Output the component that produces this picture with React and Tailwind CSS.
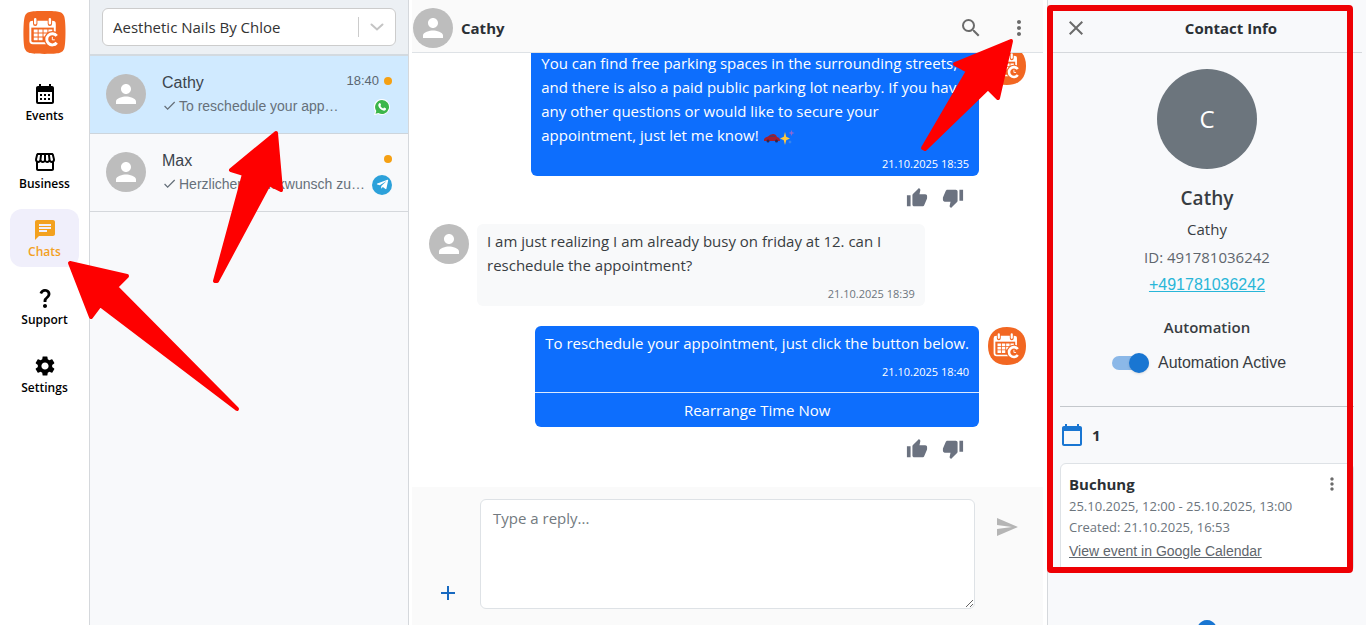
import { useState } from "react";
import { FaTelegramPlane, FaWhatsapp } from "react-icons/fa";
import {
  MdAdd,
  MdAddCircle,
  MdCalendarMonth,
  MdCalendarToday,
  MdChat,
  MdClose,
  MdDone,
  MdMoreVert,
  MdOutlineStorefront,
  MdPerson,
  MdQuestionMark,
  MdSearch,
  MdSend,
  MdSettings,
  MdThumbDown,
  MdThumbUp,
} from "react-icons/md";

const navItems = [
  { label: "Events", icon: MdCalendarMonth },
  { label: "Business", icon: MdOutlineStorefront },
  { label: "Chats", icon: MdChat, active: true },
  { label: "Support", icon: MdQuestionMark },
  { label: "Settings", icon: MdSettings },
];

const chats = [
  {
    name: "Cathy",
    preview: "To reschedule your app…",
    time: "18:40",
    channel: "whatsapp",
    selected: true,
  },
  {
    name: "Max",
    preview: "Herzlichen Glückwunsch zu…",
    time: "",
    channel: "telegram",
  },
];

function Logo({ className, round }) {
  return (
    <svg viewBox="0 0 44 44" className={className} aria-hidden="true">
      <path
        d={
          round
            ? "M22 0C36 0 44 8 44 22S36 44 22 44 0 36 0 22 8 0 22 0Z"
            : "M22 0C38 0 40 1 42 5C44 9 44 35 42 39C40 43 38 44 22 44S4 43 2 39C0 35 0 9 2 5C4 1 6 0 22 0Z"
        }
        fill="#f26722"
      />
      <rect x="7.5" y="11" width="25" height="22" rx="2.5" fill="none" stroke="#fff" strokeWidth="2" />
      <path d="M7 11h26v6H7z" fill="#fff" />
      <path d="M12.5 8v5M27.500 8v5" stroke="#f26722" strokeWidth="4.500" strokeLinecap="round" />
      <path d="M12.500 8.500v4M27.500 8.500v4" stroke="#fff" strokeWidth="2.500" strokeLinecap="round" />
      <path
        d="M11 19h4v3h-4zM16 19h4v3h-4zM21 19h4v3h-4zM26 19h4v3h-4zM11 23h4v3h-4zM16 23h4v3h-4zM21 23h4v3h-4zM11 27h4v3h-4zM16 27h4v3h-4z"
        fill="#fff"
      />
      <circle cx="30" cy="29" r="8.500" fill="#f26722" />
      <path d="M34.500 25.500a5.700 5.700 0 1 0 0 7" fill="none" stroke="#fff" strokeWidth="3" />
      <path d="M30 26.500v3h2.500" fill="none" stroke="#fff" strokeWidth="1" />
    </svg>
  );
}

function Avatar() {
  return (
    <span className="flex size-10 shrink-0 items-center justify-center rounded-full bg-[#bdbdbd] text-white">
      <MdPerson size={30} />
    </span>
  );
}

function ChannelIcon({ channel }) {
  if (channel === "whatsapp") {
    return (
      <svg viewBox="0 0 20 20" className="size-5" aria-hidden="true">
        <path d="M10 2a8 8 0 1 1-3.800 15.100L2 18.200l1.100-4A8 8 0 0 1 10 2z" fill="#fff" />
        <path d="M10 3a7 7 0 1 1-3.600 13L3.500 16.700l.8-2.800A7 7 0 0 1 10 3z" fill="#3cb64a" />
        <path
          d="M7.300 6.300c.5-.4 1-.2 1.200.3l.5 1.200c.1.400-.5.900-.6 1.200.6 1.200 1.500 2 2.700 2.500.4-.2.8-1 1.200-.9l1.400.7c.5.300.4.900.1 1.400-.6.900-1.700 1.100-2.700.8-2.300-.7-4-2.300-4.700-4.500-.3-1 .1-2.100.9-2.700z"
          fill="#fff"
        />
      </svg>
    );
  }
  return (
    <span className="flex size-5 items-center justify-center rounded-full bg-[#2ca1da] text-white">
      <FaTelegramPlane size={13} />
    </span>
  );
}

function Sidebar() {
  return (
    <nav className="flex w-[90px] shrink-0 flex-col items-center border-r border-[#d5d8dc] bg-white pt-[11px]">
      <Logo className="mb-[19px] size-[43px]" />
      <div className="flex flex-col gap-[10px]">
        {navItems.map(({ label, icon: Icon, active }) => (
          <a
            key={label}
            href="#"
            className={`flex h-[58px] w-[69px] flex-col items-center rounded-xl pt-[9px] text-xs font-semibold ${
              active ? "bg-[#f0effb] text-[#f3a11f]" : "text-black"
            }`}
          >
            <Icon size={24} />
            <span className="leading-5">{label}</span>
          </a>
        ))}
      </div>
    </nav>
  );
}

function ChatList() {
  return (
    <aside className="flex w-[319px] shrink-0 flex-col border-r border-[#d5d8dc] bg-[#f8f9fb]">
      <div className="border-b-2 border-[#d3dae0] bg-[#ecf0f4] px-3 pt-2 pb-2">
        <label className="relative flex h-[38px] items-center rounded-md border border-[#ccc] bg-white">
          <select
            aria-label="Business"
            className="h-full w-full appearance-none bg-transparent pl-[10px] text-[15px] text-[#333]"
          >
            <option>Aesthetic Nails By Chloe</option>
          </select>
          <span className="pointer-events-none absolute inset-y-2 right-0 flex w-[37px] items-center justify-center border-l border-[#ccc]">
            <svg viewBox="0 0 14 8" className="h-2 w-3.5" fill="none" stroke="#c4c4c4" strokeWidth="2">
              <path d="M1.500 1.500 7 6.500l5.500-5" strokeLinecap="round" />
            </svg>
          </span>
        </label>
      </div>
      {chats.map((chat) => (
        <button
          key={chat.name}
          type="button"
          className={`flex h-[78px] items-center border-b px-4 pb-[2px] text-left font-['Liberation_Sans',sans-serif] ${
            chat.selected ? "border-[#cdd5dc] bg-[#d0eaff]" : "border-[#d5d8dc]"
          }`}
        >
          <Avatar />
          <span className="ml-4 min-w-0 flex-1">
            <span className="block leading-6 text-[#3b444d]">{chat.name}</span>
            <span className="flex items-center gap-[2px] text-sm leading-[22px] whitespace-nowrap text-[#66707a]">
              <MdDone size={15} className="shrink-0" />
              {chat.preview}
            </span>
          </span>
          <span className="flex flex-col items-end gap-[6px]">
            <span className="flex h-5 items-center gap-[5px] text-[13px] text-[#5b6670]">
              {chat.time}
              <span className="size-2 rounded-full bg-[#f5a013]" />
            </span>
            <ChannelIcon channel={chat.channel} />
          </span>
        </button>
      ))}
    </aside>
  );
}

function Feedback() {
  return (
    <div className="mt-[11px] mr-[62px] flex justify-end gap-[14px] text-[#6b7280]">
      <button type="button" aria-label="Good reply">
        <MdThumbUp size={22} />
      </button>
      <button type="button" aria-label="Bad reply">
        <MdThumbDown size={22} />
      </button>
    </div>
  );
}

function CarSparkles() {
  return (
    <svg viewBox="0 0 32 16" className="inline-block h-4 w-8" role="img" aria-label="Car and sparkles">
      <path d="M1 10q1-2 4-2.500Q7 5 10 5t4 3q3 .5 3 4H1z" fill="#a51d2d" />
      <path d="M6 8q1-1.700 3.500-1.700T12.500 8z" fill="#4a3a68" />
      <circle cx="5" cy="12" r="1.500" fill="#33264a" />
      <circle cx="13.500" cy="12" r="1.500" fill="#33264a" />
      <path d="m22 3 1.200 4.800L27 9.500l-3.800 1.700L22 16l-1.200-4.800L17 9.500l3.800-1.700z" fill="#ffc83d" />
      <path d="m28.500 1 .8 2.200 2.200.8-2.200.8-.8 2.200-.8-2.200L25.500 4l2.200-.8z" fill="#9068d0" />
      <path d="m27 11 .5 1.500 1.500.5-1.500.5L27 15l-.5-1.500L25 13l1.500-.5z" fill="#4a90e8" />
    </svg>
  );
}

function Conversation() {
  return (
    <main className="flex min-w-0 flex-1 flex-col bg-white pr-1 pl-[3px]">
      <header className="flex h-[53px] shrink-0 items-center border-b border-[#dee2e6] bg-[#fafafa] pt-1 pr-3 pl-px">
        <Avatar />
        <h1 className="ml-2 flex-1 text-[15px] font-bold text-[#2b3035]">Cathy</h1>
        <button type="button" aria-label="Search" className="px-3 text-[#6b6b6b]">
          <MdSearch size={24} />
        </button>
        <button type="button" aria-label="More" className="pl-3 text-[#6b6b6b]">
          <MdMoreVert size={24} />
        </button>
      </header>

      <section className="flex min-h-0 flex-1 flex-col justify-end overflow-hidden pr-[17px] pb-[27px] pl-[17px] text-[15px] leading-6">
        <div className="flex items-start justify-end gap-[9px]">
          <div className="w-3/4 rounded-md bg-[#0d6efd] px-[10px] pt-[5px] pb-[3px] text-white">
            <p>
              You can find free parking spaces in the surrounding streets,
              <br />
              and there is also a paid public parking lot nearby. If you have
              <br />
              any other questions or would like to secure your
              <br />
              appointment, just let me know! <CarSparkles />
            </p>
            <p className="mt-2 text-right text-[11px] leading-[18px]">21.10.2025 18:35</p>
          </div>
          <Logo round className="mt-px size-[38px] shrink-0" />
        </div>
        <Feedback />

        <div className="mt-[15px] flex items-start gap-2">
          <Avatar />
          <div className="w-3/4 rounded-md bg-[#f8f9fa] px-[10px] pt-[5px] pb-[3px] text-[#383d42]">
            <p>
              I am just realizing I am already busy on friday at 12. can I
              <br />
              reschedule the appointment?
            </p>
            <p className="mt-2 text-right text-[11px] leading-[18px] text-[#6c757d]">21.10.2025 18:39</p>
          </div>
        </div>

        <div className="mt-5 flex items-start justify-end gap-[9px]">
          <div className="overflow-hidden rounded-md bg-[#0d6efd] text-white">
            <div className="px-[10px] pt-[5px] pb-[11px]">
              <p>To reschedule your appointment, just click the button below.</p>
              <p className="mt-2 text-right text-[11px] leading-[18px]">21.10.2025 18:40</p>
            </div>
            <button type="button" className="h-[35px] w-full border-t border-[#dbe9ff]">
              Rearrange Time Now
            </button>
          </div>
          <Logo round className="mt-px size-[38px] shrink-0" />
        </div>
        <Feedback />
      </section>

      <footer className="flex shrink-0 gap-2 bg-[#fafafa] px-3 pt-3 pb-4">
        <button
          type="button"
          aria-label="Add attachment"
          className="flex h-8 w-12 items-center justify-center self-end text-[#1769c0]"
        >
          <MdAdd size={24} />
        </button>
        <textarea
          aria-label="Reply"
          placeholder="Type a reply..."
          className="h-[110px] min-w-0 flex-1 rounded-md border border-[#dee2e6] bg-white px-3 py-[6px] text-[15px] leading-6 placeholder:text-[#737a80]"
        />
        <button
          type="button"
          aria-label="Send"
          className="flex h-14 w-12 items-center justify-center text-[#b5b5b5]"
        >
          <MdSend size={24} />
        </button>
      </footer>
    </main>
  );
}

function ContactInfo() {
  const [automation, setAutomation] = useState(true);

  return (
    <aside className="flex w-[319px] shrink-0 flex-col overflow-hidden border-l border-[#d5d8dc] bg-[#f8f9fb]">
      <header className="mx-1 flex h-[53px] shrink-0 items-center border-b border-[#d5d8dc] px-3 pt-1">
        <button type="button" aria-label="Close" className="text-[#6b6b6b]">
          <MdClose size={24} />
        </button>
        <h2 className="flex-1 pl-6 text-center text-[15px] font-bold text-[#2b3035]">Contact Info</h2>
      </header>

      <div className="flex flex-col items-center px-3 pt-4 text-[15px] text-[#383d42]">
        <div className="flex size-[100px] items-center justify-center rounded-full bg-[#6c757d] text-2xl text-white">
          C
        </div>
        <h3 className="mt-[15px] text-[19px] leading-7 font-semibold">Cathy</h3>
        <p className="mt-1 leading-[27px]">Cathy</p>
        <p className="leading-7 text-[#5f666d]">ID: 491781036242</p>
        <a
          href="tel:+491781036242"
          className="mt-[2px] font-['Liberation_Sans',sans-serif] text-base leading-6 text-[#29b6d8] underline"
        >
          +491781036242
        </a>
        <h4 className="mt-[18px] leading-6 font-semibold">Automation</h4>
        <label className="mt-3 mr-4 flex items-center gap-[9px] font-['Liberation_Sans',sans-serif] text-base leading-6">
          <span className="relative flex h-5 w-[37px] items-center">
            <input
              type="checkbox"
              checked={automation}
              onChange={(e) => setAutomation(e.target.checked)}
              className="peer h-[14px] w-[37px] appearance-none rounded-full bg-[#bbb] checked:bg-[#8bb8e8]"
            />
            <span className="pointer-events-none absolute left-0 size-5 rounded-full bg-white shadow peer-checked:left-[17px] peer-checked:bg-[#1976d2]" />
          </span>
          Automation Active
        </label>
      </div>

      <section className="mx-3 mt-[31px] border-t border-[#c4c8cc] pt-4">
        <div className="flex items-center gap-2 text-[15px] font-bold text-[#2b3035]">
          <MdCalendarToday size={24} className="text-[#1976d2]" />1
        </div>
        <article className="mt-4 rounded-md border border-[#dee2e6] bg-white px-2 pt-2 pb-2">
          <div className="flex items-center justify-between">
            <h4 className="text-[15px] leading-6 font-bold text-[#2b3035]">Buchung</h4>
            <button type="button" aria-label="Booking options" className="mr-[3px] text-[#6b6b6b]">
              <MdMoreVert size={20} />
            </button>
          </div>
          <p className="text-[13px] leading-[21px] text-[#6c757d]">25.10.2025, 12:00 - 25.10.2025, 13:00</p>
          <p className="text-[13px] leading-[21px] text-[#6c757d]">Created: 21.10.2025, 16:53</p>
          <a
            href="#"
            className="mt-px block font-['Liberation_Sans',sans-serif] text-sm leading-6 text-[#5f666d] underline"
          >
            View event in Google Calendar
          </a>
        </article>
      </section>
      <button type="button" aria-label="Add booking" className="mt-[46px] self-center text-[#1976d2]">
        <MdAddCircle size={24} />
      </button>
    </aside>
  );
}

// Guide marks drawn over the page
function Annotations() {
  return (
    <svg
      className="pointer-events-none absolute top-0 left-0"
      width="1366"
      height="625"
      aria-hidden="true"
      fill="#fe0000"
      stroke="#fe0000"
      strokeWidth="4"
      strokeLinejoin="round"
    >
      <path d="M276 133 231 170 244 174 215 281 217 281 269 184 281 190z" />
      <path d="M70 263 127 276 116 287 237 409 100 305 91 317z" />
      <path d="M1011 41 955 64 968 71 923 148 925 149 988 88 998 98z" />
      <rect x="1050" y="8" width="300" height="562" rx="1" fill="none" stroke="#ee0004" strokeWidth="6" />
    </svg>
  );
}

export default function App() {
  return (
    <div className="relative flex h-screen overflow-hidden bg-white font-['Open_Sans','Noto_Sans',sans-serif]">
      <Sidebar />
      <ChatList />
      <Conversation />
      <ContactInfo />
      <Annotations />
    </div>
  );
}
